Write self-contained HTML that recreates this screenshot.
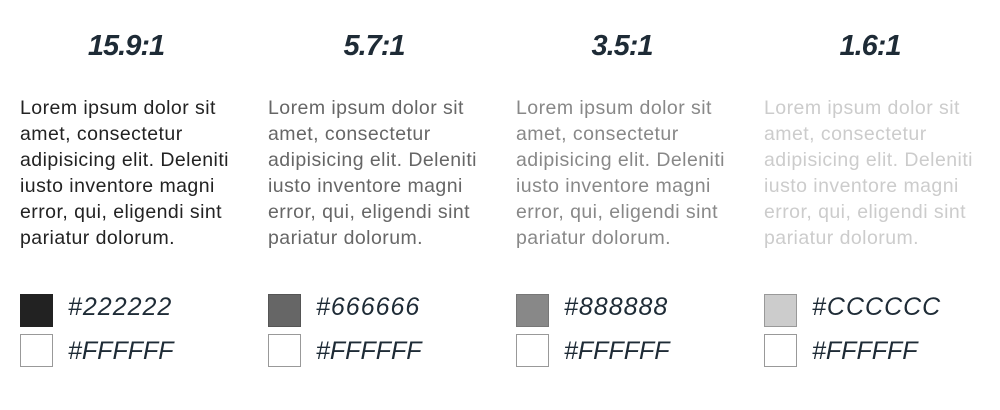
<!DOCTYPE html>
<html><head><style>
body{margin:0;width:1000px;height:410px;background:#fff;overflow:hidden;font-family:"Liberation Sans",sans-serif;}
.col{position:absolute;top:0;width:230px;}
h2{position:absolute;top:30px;left:0;width:212px;text-align:center;margin:0;font:italic bold 29px "Liberation Sans",sans-serif;color:#1e2b36;letter-spacing:-1px;}
p{position:absolute;top:95px;left:0;margin:0;font-size:19.5px;letter-spacing:0.45px;line-height:26px;width:230px;}
.sw{position:absolute;left:0;width:31px;height:31px;border:1px solid #999;}
.hx{position:absolute;left:48px;font:italic 25px "Liberation Sans",sans-serif;color:#1e2b36;letter-spacing:1px;}
.f{letter-spacing:0;}
</style></head><body>
<div class="col" style="left:20px"><h2>15.9:1</h2><p style="color:#222">Lorem ipsum dolor sit<br>amet, consectetur<br>adipisicing elit. Deleniti<br>iusto inventore magni<br>error, qui, eligendi sint<br>pariatur dolorum.</p>
<div class="sw" style="top:294px;background:#222;border-color:#222"></div><div class="hx" style="top:293px">#222222</div>
<div class="sw" style="top:334px"></div><div class="hx f" style="top:337px">#FFFFFF</div></div>
<div class="col" style="left:268px"><h2>5.7:1</h2><p style="color:#666">Lorem ipsum dolor sit<br>amet, consectetur<br>adipisicing elit. Deleniti<br>iusto inventore magni<br>error, qui, eligendi sint<br>pariatur dolorum.</p>
<div class="sw" style="top:294px;background:#666;border-color:#555"></div><div class="hx" style="top:293px">#666666</div>
<div class="sw" style="top:334px"></div><div class="hx f" style="top:337px">#FFFFFF</div></div>
<div class="col" style="left:516px"><h2>3.5:1</h2><p style="color:#888">Lorem ipsum dolor sit<br>amet, consectetur<br>adipisicing elit. Deleniti<br>iusto inventore magni<br>error, qui, eligendi sint<br>pariatur dolorum.</p>
<div class="sw" style="top:294px;background:#888;border-color:#777"></div><div class="hx" style="top:293px">#888888</div>
<div class="sw" style="top:334px"></div><div class="hx f" style="top:337px">#FFFFFF</div></div>
<div class="col" style="left:764px"><h2>1.6:1</h2><p style="color:#ccc">Lorem ipsum dolor sit<br>amet, consectetur<br>adipisicing elit. Deleniti<br>iusto inventore magni<br>error, qui, eligendi sint<br>pariatur dolorum.</p>
<div class="sw" style="top:294px;background:#ccc"></div><div class="hx" style="top:293px">#CCCCCC</div>
<div class="sw" style="top:334px"></div><div class="hx f" style="top:337px">#FFFFFF</div></div>
</body></html>
